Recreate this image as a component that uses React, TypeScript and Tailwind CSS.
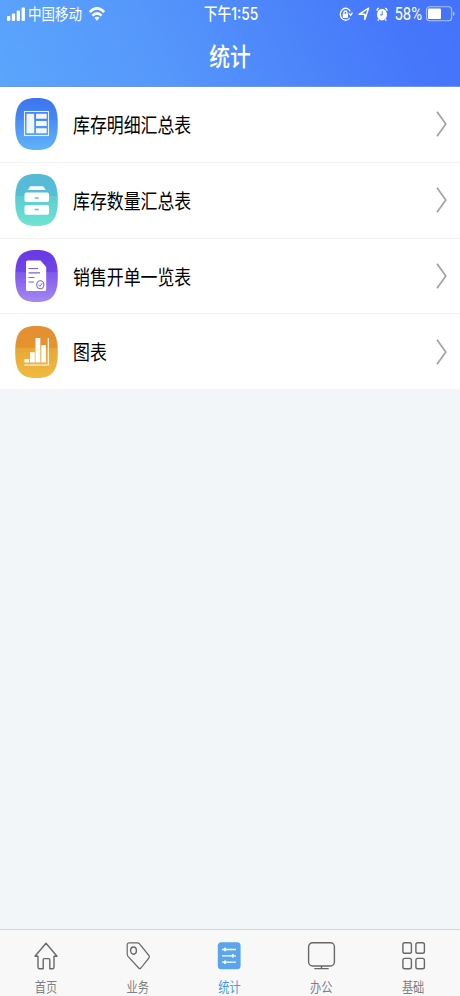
import type { ReactNode } from 'react';

const font = "font-['Liberation_Sans','Noto_Sans_CJK_SC',sans-serif]";

function Tall({ children, className = '' }: { children: ReactNode; className?: string }) {
  return <span className={`block whitespace-nowrap scale-y-[1.22] ${className}`}>{children}</span>;
}

const SHAPE = 'M21.5 0C37 0 42.8 6.5 42.8 26S37 52 21.5 52 .2 45.5 .2 26 6 0 21.5 0Z';

function Badge({ id, top, mid, low, bottom, children }: { id: string; top: string; mid: string; low: string; bottom: string; children: ReactNode }) {
  return (
    <svg width="43" height="52" viewBox="0 0 43 52" className="shrink-0">
      <defs>
        <linearGradient id={id} x1="0" y1="0" x2="0" y2="1">
          <stop offset="0" stopColor={top} />
          <stop offset="0.42" stopColor={mid} />
          <stop offset="0.42" stopColor={low} />
          <stop offset="1" stopColor={bottom} />
        </linearGradient>
      </defs>
      <path d={SHAPE} fill={`url(#${id})`} />
      {children}
    </svg>
  );
}

const rows = [
  {
    label: '库存明细汇总表',
    icon: (
      <Badge id="blue" top="#3e73f1" mid="#4688f3" low="#4a8ff4" bottom="#61b3fb">
        <rect x="9.5" y="13.5" width="24" height="24" fill="none" stroke="#e8f2ff" strokeWidth="1.1" />
        <path d="M11.5 15.7h7.7v19.6h-7.7zM21 15.7h10.7v5H21zM21 22.9h10.7v5.2H21zM21 30.2h10.7v5.1H21z" fill="#fff" fillOpacity=".92" />
      </Badge>
    ),
  },
  {
    label: '库存数量汇总表',
    icon: (
      <Badge id="teal" top="#55b9d6" mid="#55bfd6" low="#5accd3" bottom="#70e5cf">
        <path d="M15.2 12.3h13l2.5 3.7h-18zM11.3 18.5h21q1.8 0 1.8 2v5.5q0 2-1.8 2h-21q-1.8 0-1.8-2v-5.5q0-2 1.8-2zM11.3 31h21q1.8 0 1.8 2v5.8q0 2-1.8 2h-21q-1.8 0-1.8-2V33q0-2 1.8-2z" fill="#fff" />
        <path d="M19.7 24h4M19.7 35.5h4" stroke="#58c5d4" strokeWidth="1.5" />
      </Badge>
    ),
  },
  {
    label: '销售开单一览表',
    icon: (
      <Badge id="purple" top="#6639e5" mid="#7045e6" low="#8056eb" bottom="#a488f2">
        <path d="M12.5 10.5h13l5.7 6.5v22.5q0 1.5-1.5 1.5H12.5q-1.5 0-1.5-1.5V12q0-1.5 1.5-1.5z" fill="#fff" />
        <path d="M13.5 18.5h9.5M13.5 22.8H25M13.5 27.5h6M13.5 32h5.5" stroke="#8060df" strokeWidth="1.2" />
        <ellipse cx="25.3" cy="34.7" rx="3.6" ry="4" fill="#fff" stroke="#8060df" strokeWidth="1.1" />
        <path d="m23.5 34.7 1.5 1.6 2.3-3.2" fill="none" stroke="#8060df" />
      </Badge>
    ),
  },
  {
    label: '图表',
    icon: (
      <Badge id="orange" top="#e48e31" mid="#e4952f" low="#e9a735" bottom="#efbb40">
        <path d="M9.5 33h4.6v3.5H9.5zM15 26.2h4.8v10.3H15zM20.5 12h4.8v24.5h-4.8zM26.3 19h4.6v17.5h-4.6z" fill="#fff" />
        <path d="M9.3 39h24V12" fill="none" stroke="#fff" strokeWidth="1.1" />
      </Badge>
    ),
  },
];

function StatusBar() {
  return (
    <div className="grid h-7 grid-cols-[1fr_56px_1fr] items-center pl-[7px] pr-[5px] text-white">
      <div className="flex items-center">
        <svg width="19" height="15" viewBox="0 0 19 15" fill="#fff">
          <rect x="0" y="9" width="3.3" height="5" rx="1" />
          <rect x="4.8" y="6.5" width="3.3" height="7.5" rx="1" />
          <rect x="9.7" y="3.5" width="3.3" height="10.5" rx="1" />
          <rect x="14.6" y="0.5" width="3.3" height="13.5" rx="1" />
        </svg>
        <Tall className="ml-[2px] pt-[3px] text-[13.5px]">中国移动</Tall>
        <svg width="16" height="14" viewBox="0 0 16 14" className="ml-[7px]" fill="none" stroke="#fff" strokeWidth="2.6">
          <path d="M.8 5Q8-2.2 15.2 5M3.4 8.6Q8 4.2 12.6 8.6" />
          <path d="M5.4 10.8Q8 8.6 10.6 10.8L8 13.8z" fill="#fff" stroke="none" />
        </svg>
      </div>
      <Tall className="pt-px text-center font-['Inter','Noto_Sans_CJK_SC',sans-serif] text-[13.8px] font-medium">下午1:55</Tall>
      <div className="flex items-center justify-end">
        <svg width="14" height="15" viewBox="0 0 14 15" fill="none" stroke="#fff" strokeWidth="1.3">
          <path d="M11.3 4.4A5.3 6 0 1 0 10.8 11M9.8 6.2l2 2 1.7-2.6" />
          <path d="M3.8 6.7h5.2v4.2H3.8z" fill="#fff" stroke="none" />
          <path d="M4.9 7V5.4Q4.9 4 6.4 4T7.9 5.4V7" />
        </svg>
        <svg width="12" height="14" viewBox="0 0 12 14" className="ml-[5px]" fill="none" stroke="#fff" strokeWidth="1.4" strokeLinejoin="round">
          <path d="M1 7.3 10.6 1.2 6.8 12.6V7.3z" />
        </svg>
        <svg width="12" height="15" viewBox="0 0 12 15" className="ml-[6px]">
          <ellipse cx="6" cy="7.6" rx="5" ry="5.9" fill="#fff" />
          <path d="M.8 3.7Q1 1.5 3 1.1M11.2 3.7Q11 1.5 9 1.1M2.7 12.3l-1 1.4M9.3 12.3l1 1.4" stroke="#fff" strokeWidth="1.4" fill="none" />
          <path d="M6.2 4.2V8H3.9" stroke="#4b7df8" fill="none" />
        </svg>
        <Tall className="ml-[7px] font-['Roboto',sans-serif] text-[14.8px] leading-5">58%</Tall>
        <svg width="29" height="16" viewBox="0 0 29 16" className="ml-1">
          <rect x=".6" y=".8" width="25" height="14" rx="3" fill="none" stroke="#a9c4fc" strokeWidth="1.1" />
          <rect x="2" y="2.5" width="13" height="10.6" rx="1" fill="#fff" />
          <path d="M27 5.5q1.6.4 1.6 2.3T27 10.1z" fill="#a9c4fc" />
        </svg>
      </div>
    </div>
  );
}

const tabs = [
  { label: '首页', icon: <path d="M2 15.2 13 2.2l11 13h-3V26q0 1.8-1.5 1.8h-2.7v-9q0-1.2-1-1.2h-4.6q-1 0-1 1.2v9H6.5Q5 27.8 5 26V15.2z" /> },
  { label: '业务', icon: <><path d="M4 1.8h8.5q1.2 0 2 1l9.4 11.7q1 1.3 0 2.5l-8 10q-1.1 1.3-2.2 0L3 15.3q-.8-1-.8-2.2V3.7Q2.2 1.8 4 1.8z" strokeWidth="1.2" /><ellipse cx="8.5" cy="9.6" rx="2.9" ry="3.6" /></> },
  { label: '统计', icon: <><rect x="1.8" y="1.2" width="22.8" height="27" rx="3.5" fill="#5ba5ec" stroke="none" /><path d="M6 8.5h14M6 14.8h14M6 21.2h14" stroke="#fff" strokeWidth="1.3" /><path d="M9 6.7v3.6M16.8 13v3.6M9 19.4V23" stroke="#fff" strokeWidth="1.8" /></> },
  { label: '办公', icon: <><rect x="0.6" y="1.8" width="25.8" height="23.2" rx="4" /><path d="M13.5 25v2.3M6.3 27.6h14.4" /></> },
  { label: '基础', icon: <><rect x="2.9" y="1.8" width="8.5" height="10.4" rx="1.8" /><rect x="15.9" y="1.8" width="8.5" height="10.4" rx="1.8" /><rect x="2.9" y="17.4" width="8.5" height="10.4" rx="1.8" /><rect x="15.9" y="17.4" width="8.5" height="10.4" rx="1.8" /></> },
];

export default function App() {
  return (
    <div className={`flex h-[996px] w-[460px] flex-col overflow-hidden bg-[#f3f6f8] ${font}`}>
      <header className="h-[87px] shrink-0 border-b border-[#7295e2] bg-[linear-gradient(65deg,#5ba5fc_0%,#5597fb_35%,#4d86fa_60%,#4677fa_85%,#4473fb_100%)]">
        <StatusBar />
        <h1 className="flex h-14 items-center justify-center pt-[2px] text-[20.7px] font-medium leading-7 text-white">
          <Tall>统计</Tall>
        </h1>
      </header>
      <main className="flex-1">
        <ul className="flex h-[302px] flex-col bg-white">
          {rows.map((row) => (
            <li key={row.label} className="flex flex-1 items-center border-b border-[#f3f3f3] pl-[15px] pr-3 last:border-b-0">
              {row.icon}
              <Tall className="ml-[15px] flex-1 pt-[3px] text-[16.9px] text-black">{row.label}</Tall>
              <svg width="12" height="28" viewBox="0 0 12 28" fill="none" stroke="#a3a3a3" strokeWidth="1.7">
                <path d="M1 1.8 9.8 14 1 26.2" />
              </svg>
            </li>
          ))}
        </ul>
      </main>
      <nav className="grid h-[67px] shrink-0 grid-cols-5 border-t border-[#d5d7d9] bg-[#f8f8f8] pr-px">
        {tabs.map((tab) => (
          <div key={tab.label} className={`flex flex-col items-center pt-[11px] ${tab.label === '统计' ? 'text-[#439bdf]' : 'text-[#808080]'}`}>
            <svg width="26" height="30" viewBox="0 0 26 30" className="overflow-visible" fill="none" stroke="#686868" strokeWidth="1.4" strokeLinejoin="round">
              {tab.icon}
            </svg>
            <Tall className="mt-[8px] text-[11.2px] leading-4">{tab.label}</Tall>
          </div>
        ))}
      </nav>
    </div>
  );
}
